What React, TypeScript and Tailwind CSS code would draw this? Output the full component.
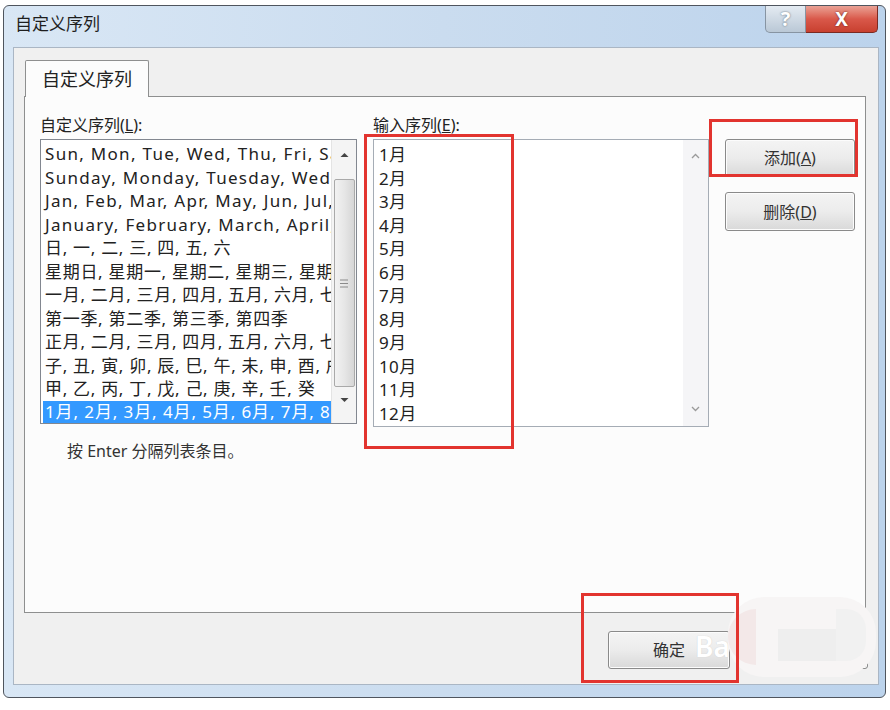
import React from "react";

const FONT = { fontFamily: '"Noto Sans", "Noto Sans CJK SC", sans-serif' };

const leftItems: { t: string; latin: boolean }[] = [
  { t: "Sun, Mon, Tue, Wed, Thu, Fri, Sat", latin: true },
  { t: "Sunday, Monday, Tuesday, Wednesday", latin: true },
  { t: "Jan, Feb, Mar, Apr, May, Jun, Jul, Aug", latin: true },
  { t: "January, February, March, April, May", latin: true },
  { t: "日, 一, 二, 三, 四, 五, 六", latin: false },
  { t: "星期日, 星期一, 星期二, 星期三, 星期四", latin: false },
  { t: "一月, 二月, 三月, 四月, 五月, 六月, 七月", latin: false },
  { t: "第一季, 第二季, 第三季, 第四季", latin: false },
  { t: "正月, 二月, 三月, 四月, 五月, 六月, 七月", latin: false },
  { t: "子, 丑, 寅, 卯, 辰, 巳, 午, 未, 申, 酉, 戌", latin: false },
  { t: "甲, 乙, 丙, 丁, 戊, 己, 庚, 辛, 壬, 癸", latin: false },
];

const months = ["1月", "2月", "3月", "4月", "5月", "6月", "7月", "8月", "9月", "10月", "11月", "12月"];

function Btn({ children, className = "" }: { children: React.ReactNode; className?: string }) {
  return (
    <div
      className={
        "flex items-center justify-center rounded-[3px] border border-[#8a8a8a] bg-gradient-to-b from-[#f4f4f4] via-[#ececec] to-[#d9d9d9] text-[16px] text-[#333] shadow-[inset_0_0_0_1px_#fcfcfc] " +
        className
      }
    >
      {children}
    </div>
  );
}

export default function App() {
  return (
    <div className="relative h-[710px] w-[890px] overflow-hidden bg-white" style={FONT}>
      <div className="ml-[3px] mt-[5px] flex h-[693px] w-[883px] flex-col rounded-[6px] border border-[#4f555e] bg-gradient-to-r from-[#d9e7f5] via-[#cadcef] to-[#bcd3ec]">
        {/* title bar */}
        <div className="flex h-[41px] items-start justify-between">
          <div className="pl-[11px] pt-[5px] text-[17px] text-[#1e1e1e]">自定义序列</div>
          <div className="mr-[7px] flex">
            <div className="flex h-[27px] w-[41px] items-center justify-center rounded-bl-[5px] border border-t-0 border-[#8794a2] bg-gradient-to-b from-[#e4ebf2] to-[#bac8d6] text-[20px] font-bold text-white [text-shadow:0_0_2px_#55606c]">
              ?
            </div>
            <div className="flex h-[27px] w-[72px] items-center justify-center rounded-br-[5px] border border-l-0 border-t-0 border-[#7a2a22] bg-gradient-to-b from-[#e9a195] via-[#d9584a] to-[#c8402f] text-[19px] font-bold text-white [text-shadow:0_0_2px_#5a1a12]">
              X
            </div>
          </div>
        </div>

        {/* client */}
        <div className="mb-[12px] ml-[9px] mr-[6px] flex flex-1 flex-col border border-[#aab6c4] bg-[#f0f0f0]">
          <div className="px-[10px] pt-[12px]">
            <div className="relative z-10 mb-[-1px] ml-[1px] flex h-[37px] w-[124px] items-center justify-center rounded-t-[2px] border border-b-0 border-[#8e8f8f] bg-[#fcfcfc] text-[18px] text-[#222]">
              自定义序列
            </div>
          </div>
          <div className="mx-[10px] mr-[12px] flex h-[517px] border border-[#8e8f8f] bg-[#fcfcfc] pl-[15px] pt-[18px]">
            {/* left column */}
            <div className="flex w-[317px] flex-col">
              <div className="h-[20px] text-[16px] leading-[20px] text-[#222]">
                自定义序列(<span className="underline">L</span>):
              </div>
              <div className="mt-[4px] flex h-[285px] border border-[#828790] bg-white">
                <div className="flex w-[290px] flex-col overflow-hidden pl-[2px] pt-[2px]">
                  {leftItems.map(({ t, latin }) => (
                    <div
                      key={t}
                      className={
                        latin
                          ? "h-[23.5px] whitespace-nowrap pl-[2px] text-[17px] leading-[23.5px] tracking-[1.3px] text-[#222]"
                          : "h-[23.5px] whitespace-nowrap pl-[2px] text-[17px] leading-[23.5px] tracking-[0.7px] text-[#222]"
                      }
                    >
                      {t}
                    </div>
                  ))}
                  <div className="h-[22px] whitespace-nowrap bg-[#3399ff] pl-[2px] text-[17px] leading-[22px] tracking-[0.9px] text-white">
                    1月, 2月, 3月, 4月, 5月, 6月, 7月, 8月
                  </div>
                </div>
                <div className="flex w-[25px] flex-col items-center border-l border-[#e4e4e4] bg-[#f4f4f4]">
                  <svg width="9" height="6" viewBox="0 0 9 6" className="mt-[12px]">
                    <path d="M0.5 5 L4.5 1 L8.5 5 Z" fill="#444" />
                  </svg>
                  <div className="mt-[21px] flex h-[208px] w-[21px] items-center justify-center rounded-[2px] border border-[#a9a9a9] bg-gradient-to-r from-[#f2f2f2] via-[#e6e6e6] to-[#d6d6d6]">
                    <svg width="8" height="9" viewBox="0 0 8 9">
                      <path d="M0 1 H8 M0 4.5 H8 M0 8 H8" stroke="#8a8a8a" strokeWidth="1" />
                    </svg>
                  </div>
                  <svg width="9" height="6" viewBox="0 0 9 6" className="mt-[10px]">
                    <path d="M0.5 1 L4.5 5 L8.5 1 Z" fill="#444" />
                  </svg>
                </div>
              </div>
              <div className="ml-[27px] mt-[17px] text-[16px] leading-[20px] text-[#333]">按 Enter 分隔列表条目。</div>
            </div>

            {/* input column */}
            <div className="ml-[16px] flex w-[336px] flex-col">
              <div className="h-[20px] text-[16px] leading-[20px] text-[#222]">
                输入序列(<span className="underline">E</span>):
              </div>
              <div className="mt-[4px] flex h-[288px] border border-[#a5acb5] bg-white">
                <div className="flex flex-1 flex-col pl-[5px] pt-[3px]">
                  {months.map((m) => (
                    <div key={m} className="h-[23.5px] text-[17px] leading-[23.5px] tracking-[0.4px] text-[#222]">
                      {m}
                    </div>
                  ))}
                </div>
                <div className="flex w-[25px] flex-col items-center bg-[#f5f5f7]">
                  <svg width="9" height="6" viewBox="0 0 9 6" className="mt-[13px]">
                    <path d="M1 5 L4.5 1.5 L8 5" fill="none" stroke="#9a9a9a" strokeWidth="1.3" />
                  </svg>
                  <div className="flex-1" />
                  <svg width="9" height="7" viewBox="0 0 9 7" className="mb-[13px]">
                    <path d="M1 1 L4.5 4.5 L8 1" fill="none" stroke="#9a9a9a" strokeWidth="1.3" />
                  </svg>
                </div>
              </div>
            </div>

            {/* buttons column */}
            <div className="ml-[16px] flex w-[130px] flex-col gap-[15px] pt-[24px]">
              <Btn className="h-[38px]">
                添加(<span className="underline">A</span>)
              </Btn>
              <Btn className="h-[39px]">
                删除(<span className="underline">D</span>)
              </Btn>
            </div>
          </div>

          {/* bottom buttons */}
          <div className="flex flex-1 items-start justify-end gap-[15px] pr-[10px] pt-[18px]">
            <Btn className="h-[38px] w-[122px] border-[#3c9fd0] shadow-[inset_0_0_0_1px_#b9e4f8]">确定</Btn>
            <Btn className="h-[38px] w-[123px]">取消</Btn>
          </div>
        </div>
      </div>

      {/* watermark blob over cancel */}
      <div className="absolute left-[728px] top-[597px] h-[80px] w-[148px] rounded-[36px] bg-[#f7f5f5]">
        <div className="absolute left-[0px] top-[12px] h-[56px] w-[28px] rounded-l-[28px] bg-[#f3e8e8]" />
        <div className="absolute left-[50px] top-[32px] h-[32px] w-[58px] bg-[#eeeeee]" />
        <div className="absolute left-[108px] top-[12px] h-[52px] w-[30px] rounded-r-[20px] bg-[#f1f1f1]" />
      </div>
      <div className="absolute left-[695px] top-[630px] text-[28px] font-semibold leading-[32px] text-white [text-shadow:0_0_1px_#c8c8c8]">
        Ba
      </div>

      {/* red annotation boxes */}
      <div className="absolute left-[364px] top-[134px] h-[315px] w-[150px] border-[3px] border-[#e2342f]" />
      <div className="absolute left-[709px] top-[119px] h-[58px] w-[149px] border-[3px] border-[#e2342f]" />
      <div className="absolute left-[581px] top-[593px] h-[90px] w-[158px] border-[3px] border-[#e2342f]" />
    </div>
  );
}
